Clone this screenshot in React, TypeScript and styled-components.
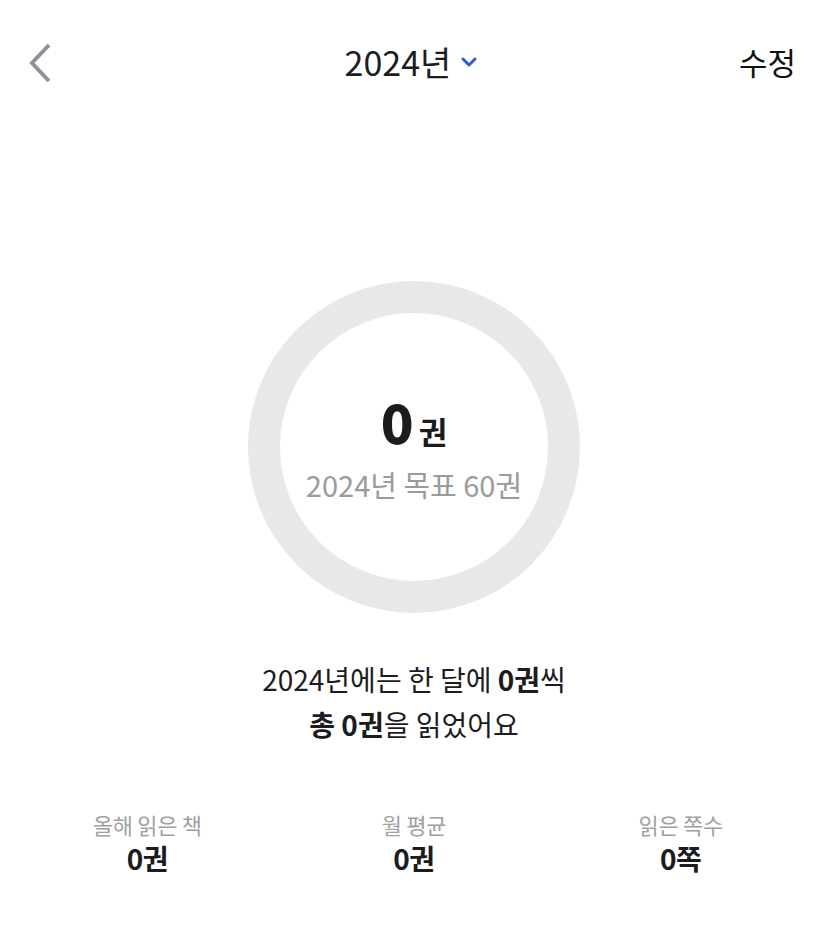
import styled, { createGlobalStyle } from "styled-components";

const GlobalStyle = createGlobalStyle`
  html, body {
    margin: 0;
    padding: 0;
    background: #ffffff;
  }
  body {
    font-family: "Noto Sans CJK KR", "Noto Sans", sans-serif;
    color: #1c1c1e;
  }
`;

const Page = styled.div`
  width: 828px;
  height: 940px;
  display: flex;
  flex-direction: column;
  align-items: center;
  overflow: hidden;
`;

const Header = styled.header`
  width: 100%;
  box-sizing: border-box;
  height: 60px;
  margin-top: 33px;
  padding: 0 32px 0 26px;
  display: grid;
  grid-template-columns: 1fr auto 1fr;
  align-items: center;
`;

const BackButton = styled.button`
  justify-self: start;
  border: none;
  background: none;
  padding: 0;
  width: 30px;
  height: 44px;
  display: flex;
  align-items: center;
  cursor: pointer;
`;

const YearPicker = styled.div`
  display: flex;
  align-items: center;
  gap: 10px;
  margin-top: -3px;
  font-size: 34px;
  color: #1c1c1e;
`;

const EditButton = styled.button`
  justify-self: end;
  border: none;
  background: none;
  padding: 0;
  margin-top: -3px;
  font-family: inherit;
  font-size: 31px;
  color: #111111;
  cursor: pointer;
`;

const Ring = styled.div`
  margin-top: 188px;
  width: 332px;
  height: 332px;
  box-sizing: border-box;
  border: 32px solid #e8e8e8;
  border-radius: 50%;
  display: flex;
  flex-direction: column;
  align-items: center;
  justify-content: center;
`;

const Count = styled.div`
  display: flex;
  align-items: baseline;
  gap: 5px;
  margin-top: 4px;
`;

const CountNumber = styled.span`
  font-size: 54px;
  font-weight: 900;
  line-height: 1;
  color: #1c1c1e;
`;

const CountUnit = styled.span`
  font-size: 31px;
  font-weight: 700;
  color: #1c1c1e;
`;

const Goal = styled.div`
  margin-top: 10px;
  font-size: 29px;
  color: #9b9b9b;
`;

const Message = styled.p`
  margin: 44px 0 0;
  text-align: center;
  font-size: 28px;
  line-height: 45px;
  color: #1c1c1e;

  b {
    font-weight: 700;
  }
`;

const Stats = styled.div`
  width: 100%;
  box-sizing: border-box;
  padding: 0 14px;
  margin-top: 62px;
  display: grid;
  grid-template-columns: repeat(3, 1fr);
`;

const Stat = styled.div`
  display: flex;
  flex-direction: column;
  align-items: center;
  gap: 3px;
`;

const StatLabel = styled.span`
  font-size: 22px;
  line-height: 30px;
  color: #a0a0a0;
  letter-spacing: -0.3px;
`;

const StatValue = styled.span`
  font-size: 28px;
  line-height: 32px;
  font-weight: 700;
  color: #1c1c1e;
  letter-spacing: -0.5px;
`;

const stats = [
  { label: "올해 읽은 책", value: "0권" },
  { label: "월 평균", value: "0권" },
  { label: "읽은 쪽수", value: "0쪽" },
];

function App() {
  return (
    <>
      <GlobalStyle />
      <Page>
        <Header>
          <BackButton aria-label="뒤로">
            <svg width="30" height="42" viewBox="0 0 30 42">
              <path
                d="M23 3 L6 21 L23 39"
                fill="none"
                stroke="#8e939b"
                strokeWidth="4"
                strokeLinecap="butt"
                strokeLinejoin="miter"
              />
            </svg>
          </BackButton>
          <YearPicker>
            2024년
            <svg width="16" height="12" viewBox="0 0 16 12">
              <path
                d="M2 3 L8 9 L14 3"
                fill="none"
                stroke="#2b5bd6"
                strokeWidth="3"
                strokeLinecap="round"
                strokeLinejoin="round"
              />
            </svg>
          </YearPicker>
          <EditButton>수정</EditButton>
        </Header>

        <Ring>
          <Count>
            <CountNumber>0</CountNumber>
            <CountUnit>권</CountUnit>
          </Count>
          <Goal>2024년 목표 60권</Goal>
        </Ring>

        <Message>
          2024년에는 한 달에 <b>0권</b>씩
          <br />
          <b>총 0권</b>을 읽었어요
        </Message>

        <Stats>
          {stats.map((s) => (
            <Stat key={s.label}>
              <StatLabel>{s.label}</StatLabel>
              <StatValue>{s.value}</StatValue>
            </Stat>
          ))}
        </Stats>
      </Page>
    </>
  );
}

export default App;
